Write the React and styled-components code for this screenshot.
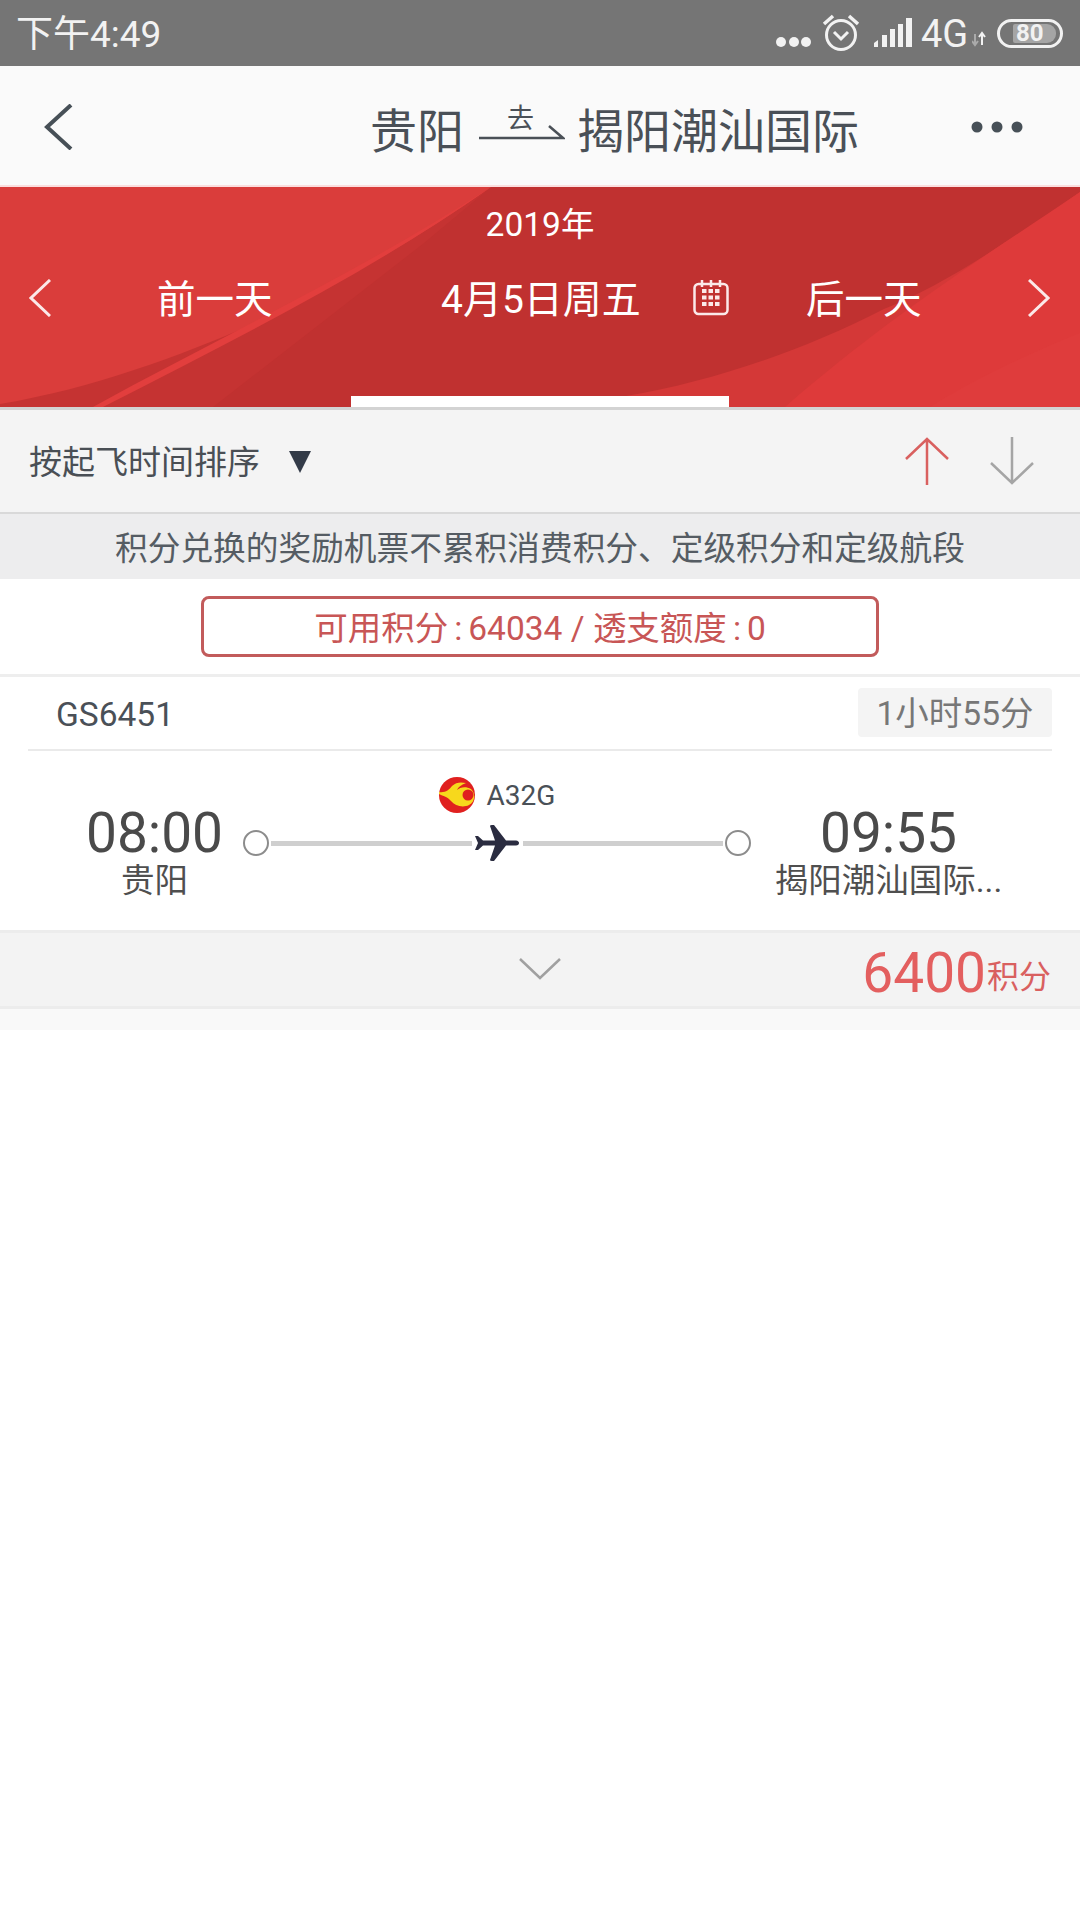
import React from "react";
import styled, { createGlobalStyle } from "styled-components";

const FONT = `Roboto, "Noto Sans CJK SC", sans-serif`;

const GlobalStyle = createGlobalStyle`
  html, body {
    margin: 0;
    padding: 0;
    background: #fff;
    font-family: ${FONT};
  }
  * {
    box-sizing: border-box;
  }
`;

const Page = styled.div`
  width: 1080px;
  height: 1920px;
  overflow: hidden;
  background: #fff;
`;

/* status bar */
const StatusBar = styled.div`
  height: 66px;
  background: #757575;
  display: flex;
  align-items: center;
  padding: 0 17px;
  color: #f2f2f2;
`;
const Clock = styled.div`
  font-size: 37px;
  line-height: 66px;
  padding-top: 3px;
  margin-left: -1px;
  flex: 1;
`;
const StatusIcons = styled.svg`
  display: block;
  flex: none;
`;
const NetLabel = styled.div`
  font-size: 38px;
  line-height: 66px;
  padding-top: 1px;
  width: 51px;
  margin-left: 8px;
`;
const Battery = styled.div`
  position: relative;
  width: 66px;
  height: 29px;
  margin: 0 0 0 11px;
  border: 3px solid #f2f2f2;
  border-radius: 15px;
  display: flex;
  align-items: center;
  padding: 0 4px 0 13px;
`;
const BatteryLevel = styled.div`
  flex: 1;
  height: 19px;
  background: #a5a5a5;
  border-radius: 2px 9px 9px 2px;
  font-size: 24px;
  font-weight: 700;
  line-height: 19px;
  padding-left: 3px;
`;

/* title bar */
const TitleBar = styled.div`
  height: 121px;
  background: #fafafa;
  border-bottom: 2px solid #fbdede;
  display: flex;
  align-items: center;
  color: #4a5057;
`;
const BackIcon = styled.svg`
  margin-left: 43px;
  margin-top: 2px;
  flex: none;
`;
const RouteTitle = styled.div`
  margin-left: 297px;
  padding-top: 12px;
  display: flex;
  align-items: center;
  font-size: 47px;
  line-height: 60px;
  width: 592px;
  white-space: nowrap;
`;
const RouteArrow = styled.div`
  position: relative;
  width: 86px;
  height: 60px;
  margin: 0 12px 0 15px;
`;
const RouteWord = styled.span`
  position: absolute;
  left: 28px;
  top: -3px;
  font-size: 27px;
  line-height: 40px;
`;
const RouteLine = styled.svg`
  position: absolute;
  left: 0;
  top: 19px;
`;
const MoreIcon = styled.svg`
  flex: none;
  margin-left: 9px;
  margin-top: 2px;
`;

/* date band */
const DateBand = styled.div`
  position: relative;
  height: 220px;
  background: #c03130;
  color: #fff;
  overflow: hidden;
`;
const BandArt = styled.svg`
  position: absolute;
  inset: 0;
`;
const BandContent = styled.div`
  position: relative;
`;
const Year = styled.div`
  font-size: 33.5px;
  line-height: 44px;
  padding-top: 16px;
  text-align: center;
`;
const DateRow = styled.div`
  display: grid;
  grid-template-columns: 351px 378px 351px;
  height: 66px;
  margin-top: 16px;
`;
const DateCell = styled.div`
  display: flex;
  align-items: center;
  padding-left: ${(p) => p.$pad}px;
`;
const DayLink = styled.div`
  font-size: 38.5px;
  line-height: 66px;
  padding-top: 4px;
  margin-left: ${(p) => p.$left || 0}px;
  margin-right: ${(p) => p.$right || 0}px;
`;
const CurrentDate = styled.div`
  font-size: 39px;
  line-height: 66px;
  padding-top: 4px;
  margin-right: 52px;
  white-space: nowrap;
`;
const ActiveTab = styled.div`
  position: absolute;
  left: 351px;
  bottom: 0;
  width: 378px;
  height: 11px;
  background: #fff;
`;

/* sort bar */
const SortBar = styled.div`
  height: 107px;
  background: #f4f4f4;
  border-top: 3px solid #d3d3d3;
  border-bottom: 2px solid #d9d9d9;
  display: flex;
  align-items: center;
  padding: 0 0 0 29px;
`;
const SortLabel = styled.div`
  font-size: 33px;
  line-height: 50px;
  padding-top: 4px;
  color: #4a4f55;
  margin-right: 29px;
`;
const SortCaret = styled.svg`
  flex: none;
  margin-right: 594px;
  margin-top: 1px;
`;
const SortArrow = styled.svg`
  flex: none;
  margin-right: ${(p) => p.$right || 0}px;
`;

const Notice = styled.div`
  height: 65px;
  background: #ededee;
  color: #555c63;
  font-size: 32.7px;
  line-height: 70px;
  text-align: center;
`;

const PointsArea = styled.div`
  height: 98px;
  padding-top: 17px;
  background: #fff;
  display: flex;
  justify-content: center;
  align-items: flex-start;
  border-bottom: 3px solid #eeeeee;
`;
const PointsBox = styled.div`
  width: 678px;
  height: 61px;
  border: 3px solid #c25b5b;
  border-radius: 8px;
  color: #c85656;
  font-size: 33.5px;
  line-height: 59px;
  text-align: center;
`;
const Colon = styled.span`
  margin: 0 6px;
`;

/* flight card */
const FlightHead = styled.div`
  margin: 0 28px;
  height: 74px;
  border-bottom: 2px solid #eaeaea;
  display: flex;
  align-items: center;
  justify-content: space-between;
  color: #4a5057;
  padding-left: 28px;
`;
const FlightNo = styled.div`
  font-size: 33.5px;
  padding-top: 2px;
`;
const Duration = styled.div`
  width: 194px;
  height: 49px;
  margin-top: -2px;
  background: #f4f4f4;
  border-radius: 4px;
  color: #777;
  font-size: 33.5px;
  line-height: 52px;
  text-align: center;
`;
const FlightBody = styled.div`
  height: 179px;
  display: grid;
  grid-template-columns: 177px 508px 275px;
  padding-left: 66px;
`;
const Stop = styled.div`
  padding-top: 55px;
  text-align: center;
`;
const StopTime = styled.div`
  font-size: 55px;
  line-height: 55px;
  color: #4a4a4a;
`;
const StopName = styled.div`
  font-size: 33.5px;
  line-height: 40px;
  color: #4f4f4f;
  white-space: nowrap;
`;
const Route = styled.div`
  padding-top: 26px;
`;
const Carrier = styled.div`
  display: flex;
  justify-content: center;
  align-items: center;
  gap: 12px;
  height: 36px;
  font-size: 28px;
  color: #4a5057;
`;
const Track = styled.div`
  display: flex;
  align-items: center;
  height: 46px;
  margin-top: 7px;
`;
const TrackDot = styled.div`
  flex: none;
  width: 26px;
  height: 26px;
  border: 2px solid #8c8c8c;
  border-radius: 50%;
  background: #fff;
`;
const TrackLine = styled.div`
  flex: 1;
  height: 5px;
  background: #cfcfcf;
  margin: 0 ${(p) => p.$right}px 0 ${(p) => p.$left}px;
`;
const PriceBar = styled.div`
  position: relative;
  height: 79px;
  background: #f3f3f3;
  border-top: 3px solid #ececec;
  border-bottom: 3px solid #ececec;
  display: flex;
  align-items: center;
  justify-content: flex-end;
  padding-right: 29px;
`;
const Expand = styled.svg`
  position: absolute;
  left: 519px;
  top: 25px;
`;
const Price = styled.div`
  font-size: 55px;
  line-height: 73px;
  padding-top: 12px;
  color: #e35f5f;
`;
const PriceUnit = styled.span`
  font-size: 32px;
  color: #d9605f;
  margin-left: 1px;
  vertical-align: 4px;
`;
const CardFoot = styled.div`
  height: 21px;
  background: #f9f9f9;
`;

const AirlineLogo = () => (
  <svg width="36" height="36" viewBox="0 0 36 36">
    <circle cx="18" cy="18" r="18" fill="#e0201f" />
    <path
      d="M0 15C6 16 10 13 13 9C17 5 22 5 27 6C22 8 19 10 18 13C21 10 27 9 32 12C37 17 36 25 30 28C24 31 16 29 12 24C9 20 4 19 0 17Z"
      fill="#f7d81c"
    />
    <circle cx="29" cy="18" r="5.5" fill="#e0201f" />
  </svg>
);

const Plane = () => (
  <svg width="44" height="36" viewBox="0 0 44 36" style={{ flex: "none" }}>
    <path
      d="M0 11L3 11L8 15.5L20 15.5L15 1Q15 0 17 0L19 0L31 15.5L41 15.5Q44 16 44 18Q44 20 41 20.5L31 20.5L19 36L17 36Q15 36 15 35L20 20.5L8 20.5L3 25L0 25L3 18Z"
      fill="#2a2c40"
    />
  </svg>
);

const Chevron = ({ points, width = 22, height = 38 }) => (
  <svg width={width} height={height} viewBox={`0 0 ${width} ${height}`} style={{ flex: "none" }}>
    <polyline points={points} fill="none" stroke="#fbe9e9" strokeWidth="3" />
  </svg>
);

const CalendarIcon = () => (
  <svg width="36" height="36" viewBox="0 0 36 36" style={{ flex: "none" }}>
    <rect x="1.5" y="4" width="33" height="30" rx="4" fill="none" stroke="#fbe9e9" strokeWidth="2.5" />
    <path d="M9 0V7M18 0V7M27 0V7" stroke="#fbe9e9" strokeWidth="2.5" />
    {[9, 15.5, 22].map((y) =>
      [9, 15.5, 22].map((x) => <rect key={`${x}-${y}`} x={x} y={y} width="4.5" height="4" fill="#fbe9e9" />)
    )}
  </svg>
);

export default function App() {
  return (
    <Page>
      <GlobalStyle />
      <StatusBar>
        <Clock>下午4:49</Clock>
        <StatusIcons width="140" height="66" viewBox="0 0 140 66">
          <circle cx="8" cy="42" r="5" fill="#f2f2f2" />
          <circle cx="21" cy="42" r="5" fill="#f2f2f2" />
          <circle cx="33" cy="42" r="5" fill="#f2f2f2" />
          <circle cx="68" cy="35" r="14.5" fill="none" stroke="#f2f2f2" strokeWidth="3" />
          <polyline points="61,32 68,39 75,32" fill="none" stroke="#f2f2f2" strokeWidth="3" />
          <path d="M51 24L60 16M85 24L76 16" stroke="#f2f2f2" strokeWidth="3.5" />
          <path d="M101 47V43L105 40V47Z" fill="#f2f2f2" />
          <rect x="109" y="35" width="5" height="12" fill="#f2f2f2" />
          <rect x="117" y="29" width="5" height="18" fill="#f2f2f2" />
          <rect x="125" y="24" width="5" height="23" fill="#f2f2f2" />
          <rect x="133" y="18" width="6" height="29" fill="#f2f2f2" />
        </StatusIcons>
        <NetLabel>4G</NetLabel>
        <StatusIcons width="14" height="66" viewBox="0 0 14 66">
          <path d="M3 34V45M0 41L3 45L6 41" fill="none" stroke="#aaa" strokeWidth="2" />
          <path d="M10 45V33M7 37L10 33L13 37" fill="none" stroke="#f2f2f2" strokeWidth="2" />
        </StatusIcons>
        <Battery>
          <BatteryLevel>80</BatteryLevel>
        </Battery>
      </StatusBar>

      <TitleBar>
        <BackIcon width="30" height="46" viewBox="0 0 30 46">
          <polyline points="28,1 4,23 28,45" fill="none" stroke="#475057" strokeWidth="4" />
        </BackIcon>
        <RouteTitle>
          贵阳
          <RouteArrow>
            <RouteWord>去</RouteWord>
            <RouteLine width="86" height="22" viewBox="0 0 86 22">
              <polyline points="0,17 84,17 70,5" fill="none" stroke="#4a5057" strokeWidth="2.5" />
            </RouteLine>
          </RouteArrow>
          揭阳潮汕国际
        </RouteTitle>
        <MoreIcon width="52" height="12" viewBox="0 0 52 12">
          <circle cx="6" cy="6" r="5.5" fill="#475057" />
          <circle cx="26" cy="6" r="5.5" fill="#475057" />
          <circle cx="46" cy="6" r="5.5" fill="#475057" />
        </MoreIcon>
      </TitleBar>

      <DateBand>
        <BandArt width="1080" height="220" viewBox="0 0 1080 220">
          <path d="M424 56L213 220H0V0H491Z" fill="#c53332" />
          <path d="M491 0C420 50 350 90 272 129C190 165 100 200 0 217V0Z" fill="#da3d3b" />
          <path d="M491 0C360 85 220 150 93 220H103C240 150 370 85 491 0Z" fill="#e23e3d" />
          <path d="M1080 5C1000 60 940 100 884 122C800 165 710 195 626 209L590 220H1080Z" fill="#d43837" />
          <path d="M1080 5C1000 60 900 120 785 220H1080Z" fill="#de3a3a" />
          <path d="M1080 146C1020 170 970 195 930 220H1080Z" fill="#df3c3c" />
        </BandArt>
        <BandContent>
          <Year>2019年</Year>
          <DateRow>
            <DateCell $pad={29}>
              <Chevron points="21,1 2,19 21,37" />
              <DayLink $left={106}>前一天</DayLink>
            </DateCell>
            <DateCell $pad={90}>
              <CurrentDate>4月5日周五</CurrentDate>
              <CalendarIcon />
            </DateCell>
            <DateCell $pad={77}>
              <DayLink $right={106}>后一天</DayLink>
              <Chevron points="1,1 20,19 1,37" />
            </DateCell>
          </DateRow>
        </BandContent>
        <ActiveTab />
      </DateBand>

      <SortBar>
        <SortLabel>按起飞时间排序</SortLabel>
        <SortCaret width="22" height="22" viewBox="0 0 22 22">
          <path d="M0 0H22L11 22Z" fill="#333b48" />
        </SortCaret>
        <SortArrow width="44" height="48" viewBox="0 0 44 48" $right={41}>
          <path d="M22 48V2M1 22L22 2L43 22" fill="none" stroke="#d9605f" strokeWidth="2.5" />
        </SortArrow>
        <SortArrow width="44" height="48" viewBox="0 0 44 48">
          <path d="M22 0V46M1 26L22 46L43 26" fill="none" stroke="#a5a5a5" strokeWidth="2.5" />
        </SortArrow>
      </SortBar>

      <Notice>积分兑换的奖励机票不累积消费积分、定级积分和定级航段</Notice>

      <PointsArea>
        <PointsBox>
          可用积分<Colon>:</Colon>64034 / 透支额度<Colon>:</Colon>0
        </PointsBox>
      </PointsArea>

      <FlightHead>
        <FlightNo>GS6451</FlightNo>
        <Duration>1小时55分</Duration>
      </FlightHead>

      <FlightBody>
        <Stop>
          <StopTime>08:00</StopTime>
          <StopName>贵阳</StopName>
        </Stop>
        <Route>
          <Carrier>
            <AirlineLogo />
            A32G
          </Carrier>
          <Track>
            <TrackDot />
            <TrackLine $left={2} $right={3} />
            <Plane />
            <TrackLine $left={4} $right={2} />
            <TrackDot />
          </Track>
        </Route>
        <Stop>
          <StopTime>09:55</StopTime>
          <StopName>揭阳潮汕国际...</StopName>
        </Stop>
      </FlightBody>

      <PriceBar>
        <Expand width="42" height="22" viewBox="0 0 42 22">
          <polyline points="1,1 21,20 41,1" fill="none" stroke="#a0a0a0" strokeWidth="2.5" />
        </Expand>
        <Price>
          6400<PriceUnit>积分</PriceUnit>
        </Price>
      </PriceBar>
      <CardFoot />
    </Page>
  );
}
